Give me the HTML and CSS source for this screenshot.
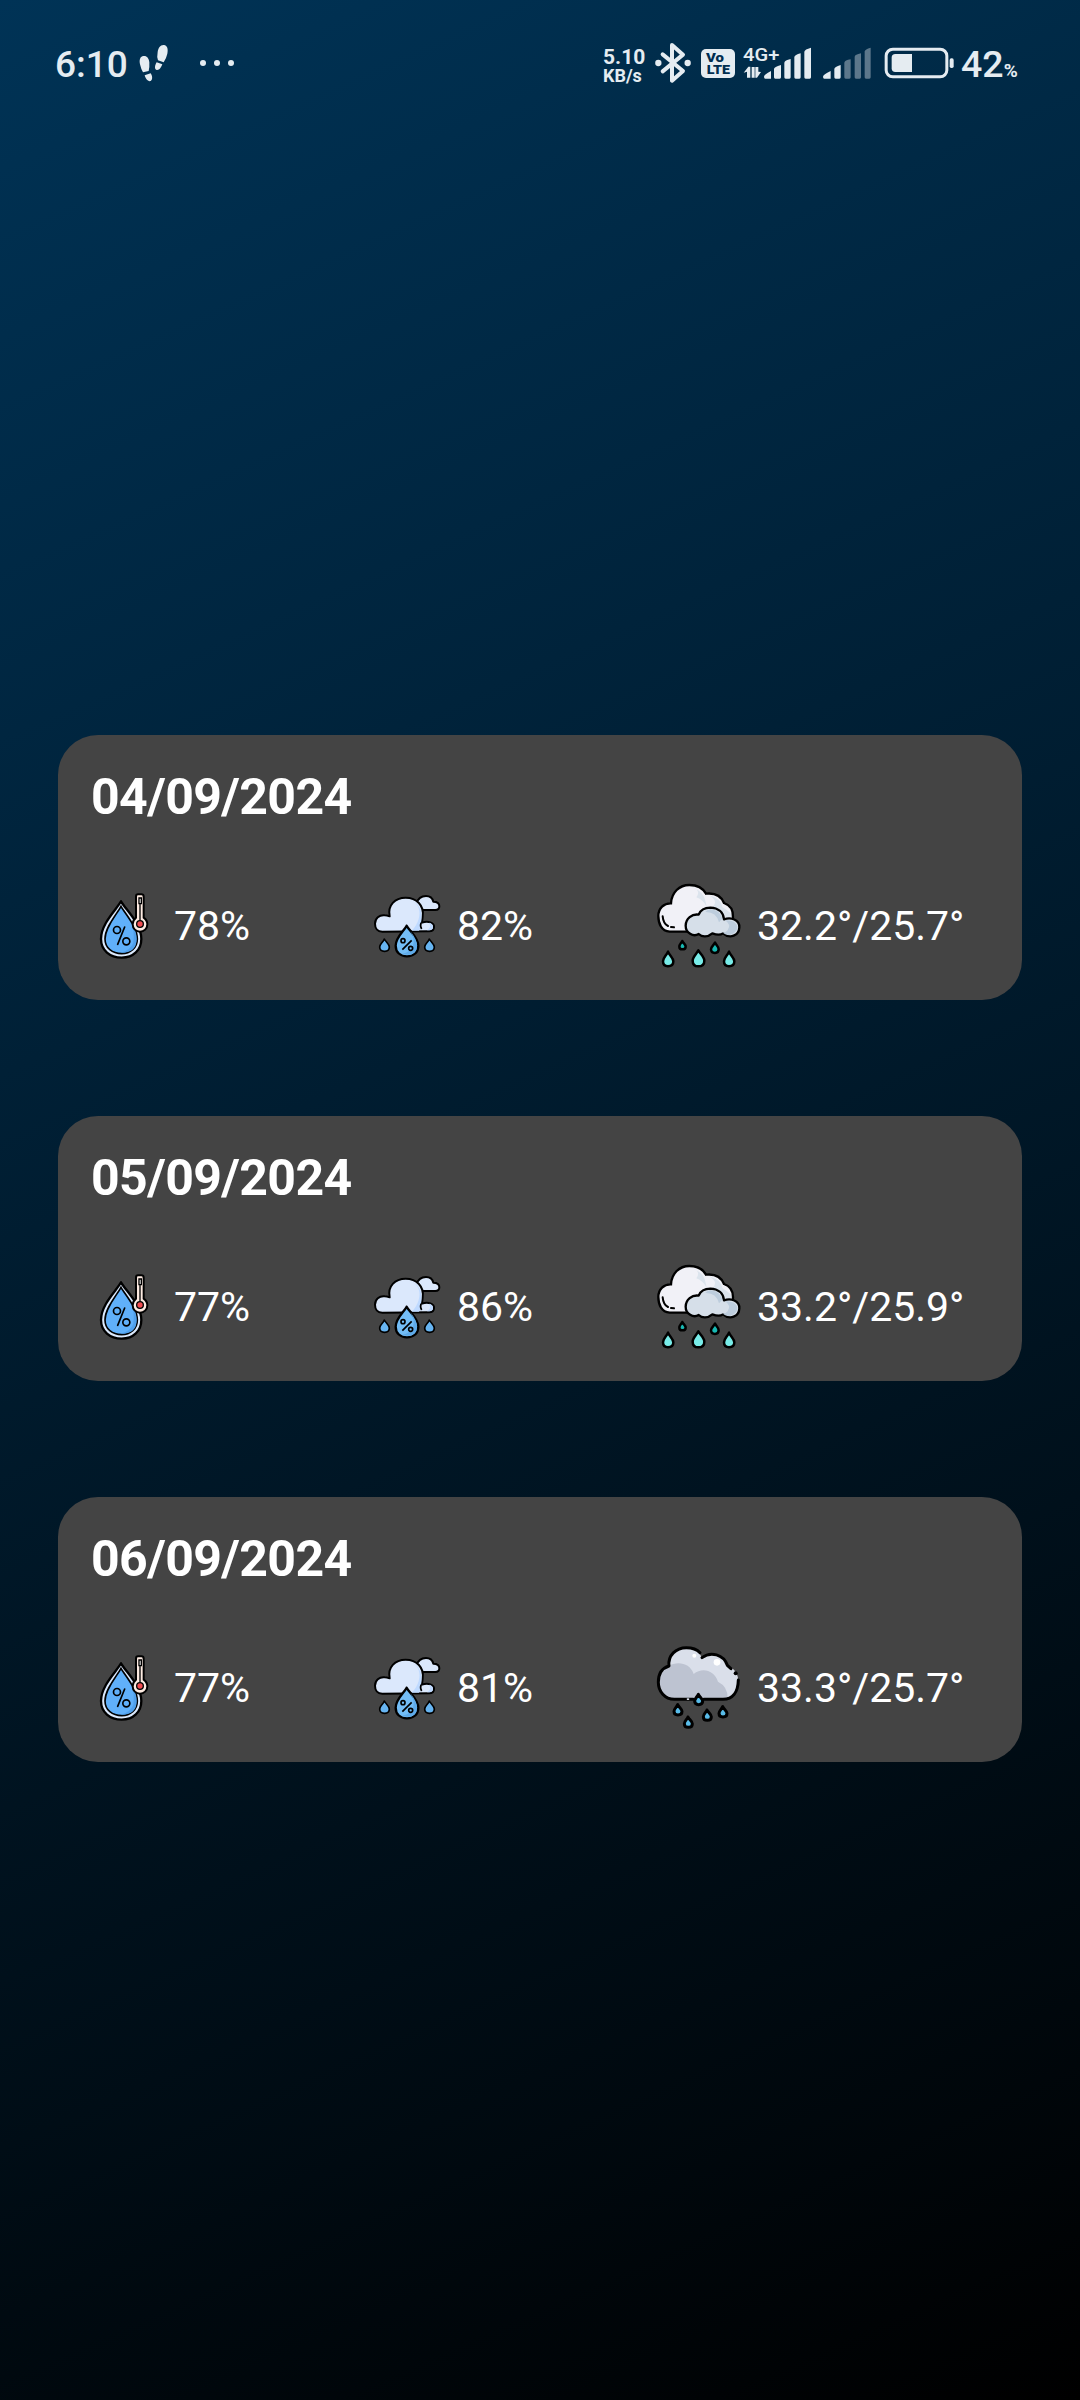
FILE: index.html
```html
<!DOCTYPE html>
<html lang="en">
<head>
<meta charset="utf-8">
<title>Forecast</title>
<link rel="stylesheet" href="styles.css">
</head>
<body>
<svg class="defs" aria-hidden="true">
  <symbol id="humidity" viewBox="30 45 210 240">
    <path d="M123 94C111 117 63 160 63 207C63 241 90 263 125 263C160 263 184 240 184 207C184 160 136 118 123 94Z" fill="#dbe9fc" stroke="#000" stroke-width="7" stroke-linejoin="round"/>
    <path d="M123 109C111 132 75 171 75 207C75 234 97 251 125 251C151 251 172 234 172 207C172 171 136 132 123 109Z" fill="#60b0fa" stroke="#000" stroke-width="5"/>
    <path d="M155 160Q164 182 160 218Q150 242 122 248Q170 250 170 207Q170 185 155 160Z" fill="#50a0ec"/>
    <path d="M134 171L113 223" stroke="#000" stroke-width="5" stroke-linecap="round"/>
    <circle cx="111" cy="180" r="10.500" fill="none" stroke="#000" stroke-width="5"/>
    <circle cx="139" cy="214" r="10.500" fill="none" stroke="#000" stroke-width="5"/>
    <path d="M168 80Q168 73 174 73H184Q191 73 191 80V143Q202 151 202 163C202 176 192 185 180 185C168 185 158 176 158 163Q158 151 168 143Z" fill="#fdebe2" stroke="#000" stroke-width="6" stroke-linejoin="round"/>
    <path d="M177 84H184V101H177ZM180 101V150" fill="#fff" stroke="#000" stroke-width="4"/>
    <circle cx="180" cy="162" r="10" fill="#ef4b4f" stroke="#000" stroke-width="4"/>
  </symbol>
  <symbol id="chance" viewBox="30 45 225 240">
    <path d="M170 100Q176 78 198 78Q216 78 220 95Q238 95 238 109Q238 120 226 120H184" fill="#dbe8fc" stroke="#000" stroke-width="6" stroke-linejoin="round"/>
    <path d="M67 185C52 185 45 174 45 161C45 145 58 134 74 136Q80 136 89 139C82 106 105 83 137 83C170 83 193 107 188 139L186 158C204 151 223 158 222 171Q222 184 207 184Z" fill="#dbe8fc" stroke="#000" stroke-width="6" stroke-linejoin="round"/>
    <path d="M156 91C178 105 182 126 176 147C172 162 163 174 155 182H177Q184 171 183 156Q191 111 156 91ZM207 158Q216 172 201 181Q219 182 219 171Q219 160 207 158Z" fill="#bfdaff"/>
    <path d="M183 158Q180 170 185 177" fill="none" stroke="#000" stroke-width="5"/>
    <path d="M140 167C132 183 107 202 107 227C107 247 121 259 141 259C161 259 175 247 175 227C175 202 148 183 140 167Z" fill="#73bdf6" stroke="#000" stroke-width="7" stroke-linejoin="round"/>
    <path d="M151 184Q166 208 159 227Q151 246 127 251Q171 263 171 226Q170 207 151 184Z" fill="#5eaae9"/>
    <path d="M155 211L127 239" stroke="#000" stroke-width="5"/>
    <circle cx="129" cy="212" r="6" fill="none" stroke="#000" stroke-width="5"/>
    <circle cx="152" cy="235" r="6" fill="none" stroke="#000" stroke-width="5"/>
    <path id="side" d="M73 207C70 216 59 222 59 231C59 240 65 244 74 244C83 244 88 238 88 231C88 222 77 215 73 207Z" fill="#67b5f2" stroke="#000" stroke-width="5" stroke-linejoin="round"/>
    <use href="#side" x="135"/>
  </symbol>
  <symbol id="drizzle" viewBox="30 30 300 270">
    <path d="M89 185C64 183 55 160 55 138C55 115 72 99 93 100C95 67 118 45 148 45C173 45 189 55 198 71C226 68 244 79 252 99C270 105 280 120 279 142L240 185Z" fill="#f1f1f7"/>
    <path d="M154 50Q193 65 197 96L200 110Q190 90 169 82Q185 59 154 50ZM205 75Q242 84 248 112L271 128L276 141L259 144L239 119L218 111Q237 91 205 75Z" fill="#dce4ed"/>
    <path d="M141 185H89C64 183 55 160 55 138C55 115 72 99 93 100C95 67 118 45 148 45C173 45 189 55 198 71C226 68 244 79 252 99C270 105 280 120 279 142" fill="none" stroke="#000" stroke-width="7" stroke-linecap="round"/>
    <path d="M68 139Q70 161 84 168M93 171L102 172" fill="none" stroke="#000" stroke-width="6" stroke-linecap="round"/>
    <path d="M176 134C182 119 193 113 211 113C235 114 250 127 252 148C272 141 299 148 298 172C297 197 270 208 249 190Q238 198 217 190C203 202 186 202 176 192C160 202 137 189 137 167C137 146 156 131 176 134Z" fill="#d6dfe9" stroke="#000" stroke-width="7" stroke-linejoin="round"/>
    <path d="M211 118Q240 121 247 146L237 157Q229 125 196 126Q202 119 211 118ZM255 151Q275 163 263 181Q255 190 247 187Q261 200 278 191Q293 184 292 169Q286 149 255 151Z" fill="#bdcddd"/>
    <path id="bigdrop" d="M84 245C79 257 69 263 69 274C69 284 75 289 84 289C94 289 100 283 100 274C100 263 89 257 84 245Z" fill="#78ece8" stroke="#000" stroke-width="7.500" stroke-linejoin="round"/>
    <path d="M175 241C170 252 158 261 158 272C158 284 165 289 175 289C186 289 193 283 193 272C193 261 181 252 175 241Z" fill="#78ece8" stroke="#000" stroke-width="7.500" stroke-linejoin="round"/>
    <use href="#bigdrop" x="183"/>
    <path d="M127 213C123 220 118 223 118 230C118 235 121 238 127 238C133 238 137 235 137 230C137 223 130 220 127 213Z" fill="#18b9b3" stroke="#000" stroke-width="7.500" stroke-linejoin="round"/>
    <path d="M225 218C221 226 213 230 213 238C213 245 217 249 225 249C233 249 236 245 236 238C236 230 229 226 225 218Z" fill="#18b9b3" stroke="#000" stroke-width="7.500" stroke-linejoin="round"/>
  </symbol>
  <symbol id="rain" viewBox="30 36 300 270">
    <path d="M105 208C74 209 55 184 55 157C55 132 67 114 87 108C83 76 108 53 139 53C161 53 177 63 186 83C212 63 251 73 262 106C284 116 296 132 295 158C294 188 278 208 249 208Z" fill="#dadfea"/>
    <path d="M85 108C112 93 150 98 161 132C187 111 223 121 234 155Q264 170 263 205L249 208H105C74 209 58 184 58 157Q60 117 85 108Z" fill="#bdc3d1"/>
    <path d="M191 208H249C278 208 294 187 295 150M273 116L262 106C251 73 212 63 186 83M180 68C171 58 159 53 139 53C108 53 83 76 87 108C67 114 55 132 55 157C55 184 74 209 105 208H160" fill="none" stroke="#000" stroke-width="9" stroke-linecap="round" stroke-linejoin="round"/>
    <circle cx="287" cy="130" r="6"/>
    <circle cx="231" cy="97" r="10" fill="#fff"/><circle cx="163" cy="77" r="6" fill="#fff"/>
    <path d="M144 205V210" stroke="#dadfea" stroke-width="7"/>
    <path id="raindrop" d="M175 193C172 200 164 206 164 213C164 221 169 224 176 224C183 224 188 220 188 213C188 206 178 200 175 193Z" fill="#59bce9" stroke="#000" stroke-width="9" stroke-linejoin="round"/>
    <use href="#raindrop" x="-62" y="31"/><use href="#raindrop" x="-31" y="68"/>
    <use href="#raindrop" x="26" y="47"/><use href="#raindrop" x="73" y="37"/>
  </symbol>
</svg>

<header class="status">
  <span class="time">6:10</span>
  <svg class="notices" viewBox="285 0 315 210">
    <path d="M309 78C300 80 297 91 300 103Q303 117 309 127L326 123Q329 114 328 97C327 84 320 76 309 78ZM314 136L332 130C337 137 339 149 332 153C324 156 316 145 314 136Z"/>
    <path d="M372 45C382 46 385 58 382 71Q379 85 371 97L354 91Q350 82 353 66C355 53 361 44 372 45ZM350 97L367 103C364 112 357 122 350 120C342 117 345 105 350 97Z"/>
    <circle cx="489" cy="99" r="9"/><circle cx="531" cy="99" r="9"/><circle cx="573" cy="99" r="9"/>
  </svg>
  <div class="system">
    <div class="speed"><span class="rate">5.10</span><span class="unit">KB/s</span></div>
    <svg class="bluetooth" viewBox="180 0 138 210">
      <path d="M218 73L279 123L246 152V45L279 74L218 124" fill="none" stroke="#e5ecf1" stroke-width="12" stroke-linejoin="round" stroke-linecap="round"/>
      <circle cx="205" cy="99" r="9.500"/><circle cx="293" cy="99" r="9.500"/>
    </svg>
    <svg class="volte" viewBox="318 0 132 210">
      <rect x="333" y="57" width="102" height="87" rx="15"/>
      <text class="badge" x="348" y="95" textLength="54" lengthAdjust="spacingAndGlyphs">Vo</text>
      <text class="badge" x="350" y="133" textLength="70" lengthAdjust="spacingAndGlyphs">LTE</text>
    </svg>
    <svg class="mobile" viewBox="450 0 228 210">
      <text class="network" x="459" y="93" textLength="109" lengthAdjust="spacingAndGlyphs">4G+</text>
      <path d="M471 143V125L461 128L475 110H481V143ZM485 111H494V143H485ZM496 111H505V125L513 126L501 143H496Z"/>
      <path d="M522 140Q522 134 543 123V146H526Q522 146 522 140ZM552 117Q552 111 573 105V142Q573 146 569 146H556Q552 146 552 142ZM583 98Q584 91 602 87V142Q602 146 598 146H587Q583 146 583 142ZM613 81Q614 75 632 70V142Q632 146 628 146H617Q613 146 613 142ZM643 65Q644 58 663 53V142Q663 146 659 146H647Q643 146 643 142Z"/>
    </svg>
    <svg class="second-sim" viewBox="18 0 192 210">
      <path d="M39 140Q39 134 62 123V146H43Q39 146 39 140ZM73 117Q73 111 92 105V142Q92 146 88 146H77Q73 146 73 142Z"/>
      <path opacity=".4" d="M103 98Q104 91 122 88V142Q122 146 118 146H107Q103 146 103 142ZM134 80Q135 74 153 70V142Q153 146 149 146H138Q134 146 134 142ZM164 64Q165 58 182 53V142Q182 146 178 146H168Q164 146 164 142Z"/>
    </svg>
    <svg class="battery" viewBox="210 0 234 210">
      <rect x="228.500" y="57.500" width="182" height="83" rx="20" fill="none" stroke="#e5ecf1" stroke-width="9"/>
      <path d="M306 72V126H256Q245 126 245 115V83Q245 72 256 72Z"/>
      <rect x="419" y="85" width="12" height="29" rx="5"/>
    </svg>
    <div class="charge">42<span class="percent">%</span></div>
  </div>
</header>

<main class="forecast">
  <section class="card">
    <h2 class="date">04/09/2024</h2>
    <div class="readings">
      <svg class="icon-humidity"><use href="#humidity"/></svg><span class="value">78%</span>
      <svg class="icon-chance"><use href="#chance"/></svg><span class="value">82%</span>
      <svg class="icon-sky"><use href="#drizzle"/></svg><span class="value">32.2°/25.7°</span>
    </div>
  </section>
  <section class="card">
    <h2 class="date">05/09/2024</h2>
    <div class="readings">
      <svg class="icon-humidity"><use href="#humidity"/></svg><span class="value">77%</span>
      <svg class="icon-chance"><use href="#chance"/></svg><span class="value">86%</span>
      <svg class="icon-sky"><use href="#drizzle"/></svg><span class="value">33.2°/25.9°</span>
    </div>
  </section>
  <section class="card">
    <h2 class="date">06/09/2024</h2>
    <div class="readings">
      <svg class="icon-humidity"><use href="#humidity"/></svg><span class="value">77%</span>
      <svg class="icon-chance"><use href="#chance"/></svg><span class="value">81%</span>
      <svg class="icon-sky"><use href="#rain"/></svg><span class="value">33.3°/25.7°</span>
    </div>
  </section>
</main>
</body>
</html>
```
FILE: styles.css
```css
* { box-sizing: border-box; }
html { background: #000; }
body {
  margin: 0;
  width: 1080px;
  height: 2400px;
  overflow: hidden;
  font-family: Roboto, sans-serif;
  color: #fff;
  background: linear-gradient(155.8deg, #003356 0%, #000 100%);
}
svg { display: block; flex: none; }
.defs { width: 0; height: 0; }

.status {
  display: flex;
  height: 100px;
  padding: 30px 0 0 55px;
  color: #e5ecf1;
  fill: #e5ecf1;
}
.time {
  width: 80px;
  font-size: 37px;
  font-weight: 500;
  line-height: 69px;
}
.notices { width: 105px; height: 70px; }
.system { display: flex; width: 480px; margin-left: auto; }
.speed {
  display: flex;
  flex-direction: column;
  width: 50px;
  padding: 18px 0 0 3px;
  font-weight: 700;
}
.rate { font-size: 21px; line-height: 19px; }
.unit { font-size: 18px; line-height: 18px; }
.bluetooth { width: 46px; height: 70px; }
.volte { width: 44px; height: 70px; }
.mobile { width: 76px; height: 70px; }
.second-sim { width: 64px; height: 70px; }
.battery { width: 78px; height: 70px; }
.badge { font: 900 37px Roboto, sans-serif; fill: #002e50; }
.network { font: 500 56px Roboto, sans-serif; }
.charge {
  padding-left: 3px;
  font-size: 37.500px;
  font-weight: 500;
  line-height: 69px;
}
.percent { font-size: 19px; font-weight: 700; }

.forecast {
  display: flex;
  flex-direction: column;
  gap: 116px;
  padding: 635px 58px 0;
}
.card {
  height: 265px;
  padding: 33px 32px 0;
  border-radius: 40px;
  background: #444;
}
.date {
  margin: 0;
  padding-left: 1px;
  font-size: 50px;
  font-weight: 700;
  line-height: 58px;
  letter-spacing: -0.6px;
}
.readings {
  display: grid;
  grid-template-columns: 83px 197px 86px 194px 106px auto;
  align-items: center;
  height: 100px;
  margin-top: 49px;
}
.value {
  padding: 2px 0 0 1px;
  font-size: 41px;
  line-height: 48px;
  white-space: nowrap;
}
.icon-humidity { width: 70px; height: 80px; }
.icon-chance { width: 75px; height: 80px; }
.icon-sky { width: 100px; height: 90px; }
```
